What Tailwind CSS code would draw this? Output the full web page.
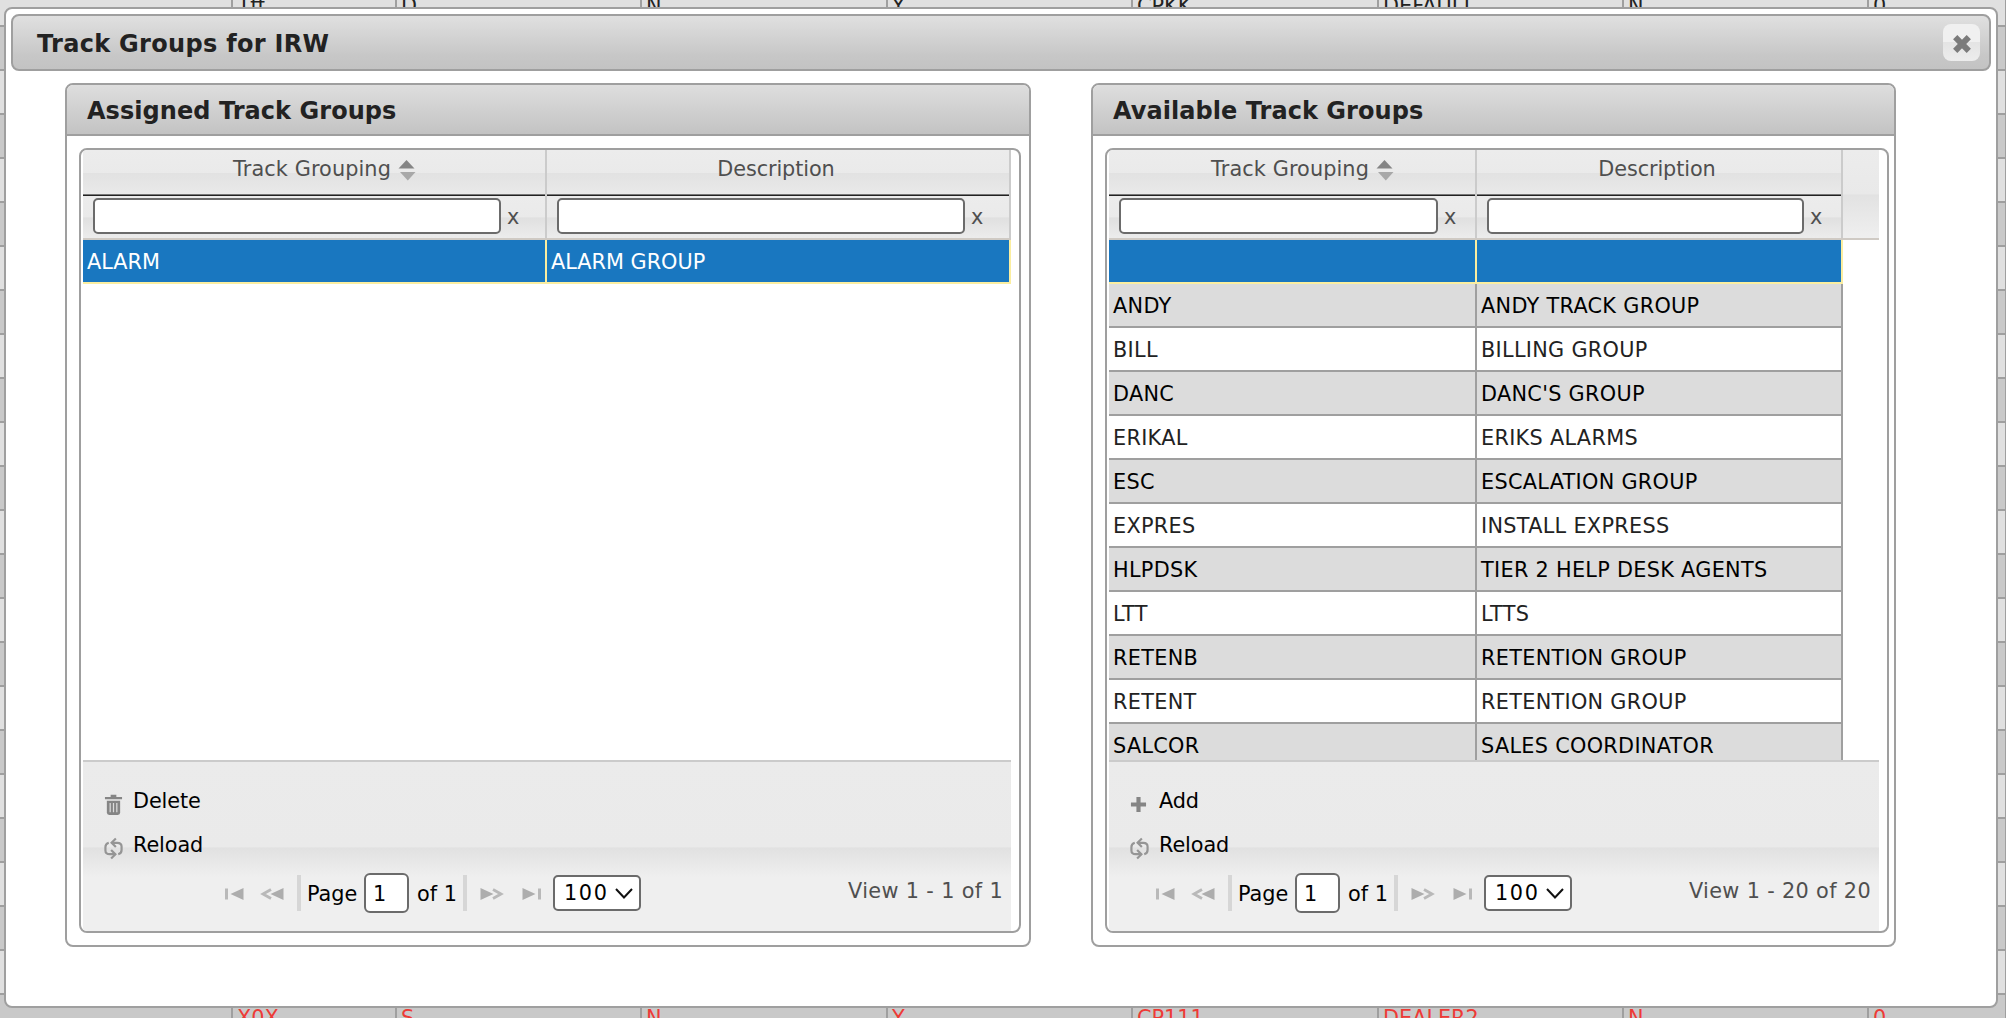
<!DOCTYPE html>
<html lang="en">
<head>
  <meta charset="UTF-8" />
  <meta name="viewport" content="width=device-width, initial-scale=1.0" />
  <title>Track Groups for IRW</title>
  <script src="https://cdn.jsdelivr.net/npm/@tailwindcss/browser@4"></script>
</head>
<body class="relative w-[2006px] h-[1018px] overflow-hidden bg-[#c9c9c9] font-['DejaVu_Sans',Verdana,sans-serif] text-[20.8px] text-black">

  <!-- icon set -->
  <svg class="hidden">
    <symbol id="i-sort" viewBox="0 0 18 22">
      <path d="M8.5 1 L16.5 9.5 H0.5 Z" fill="#858585" /><path d="M2 13 H17.5 L9.8 21.5 Z" fill="#a8a8a8" />
    </symbol>
    <symbol id="i-close" viewBox="0 0 20 20">
      <path d="M3.2 3.2 L16.8 16.8 M16.8 3.2 L3.2 16.8" stroke="#7b7b7b" stroke-width="6" />
    </symbol>
    <symbol id="i-trash" viewBox="0 0 20 22">
      <path d="M1 3.8 H19 M7 1.5 H13" stroke="#858585" stroke-width="2.4" />
      <path d="M3 6.5 H17 V19 Q17 21.5 14.5 21.5 H5.5 Q3 21.5 3 19 Z" fill="#858585" />
      <path d="M6.5 9 V18.5 M10 9 V18.5 M13.5 9 V18.5" stroke="#dcdcdc" stroke-width="1.3" />
    </symbol>
    <symbol id="i-plus" viewBox="0 0 18 18">
      <path d="M9 1 V17 M1 9 H17" stroke="#858585" stroke-width="4.4" />
    </symbol>
    <symbol id="i-reload" viewBox="0 0 20 24">
      <g fill="none" stroke="#959595" stroke-width="2.3">
        <path d="M8 6 H14 Q18.500 6 18.500 10 V13.500 Q18.500 17 15 18" />
        <path d="M12.500 1.500 L8 6 L12.500 10.500" />
        <path d="M12 18 H6 Q1.500 18 1.500 14 V10.500 Q1.500 7 5 6" />
        <path d="M7.500 13.500 L12 18 L7.500 22.500" />
      </g>
    </symbol>
    <symbol id="i-first" viewBox="0 0 24 14">
      <path d="M2.5 1.5 V12.5" stroke="#b9b9b9" stroke-width="3" /><path d="M19.5 1 V13 L6.500 7 Z" fill="#adadad" />
    </symbol>
    <symbol id="i-prev" viewBox="0 0 24 14">
      <path d="M11 2.5 L3 7 L11 11.5" fill="none" stroke="#b9b9b9" stroke-width="2.8" /><path d="M23.5 1 V13 L10.500 7 Z" fill="#adadad" />
    </symbol>
  </svg>

  <!-- page grid behind the dialog -->
  <div id="backdrop" class="absolute left-0 -top-[17px] w-[2006px] bg-[#9f9f9f]"></div>

  <!-- dialog -->
  <div class="absolute left-[4px] top-[7px] w-[1994px] h-[1001px] bg-white border-2 border-[#9f9f9f] rounded-lg p-[5px]">
    <div class="flex items-center justify-between h-[57px] pl-[24px] pr-[9px] border-2 border-[#9f9f9f] rounded-lg bg-linear-to-b from-[#e0e0e0] via-[#c7c7c7] via-75% to-[#c3c3c3]">
      <h1 class="pt-[3px] text-[24px] tracking-[0.3px] font-bold text-[#222]">Track Groups for IRW</h1>
      <button class="flex items-center justify-center size-[37px] rounded-lg bg-linear-to-b from-[#f0f0f0] from-50% via-[#e4e4e4] via-50% to-[#ededed]">
        <svg class="size-[20px] mt-0.5 ml-px"><use href="#i-close" /></svg>
      </button>
    </div>
    <div id="panels" class="flex gap-[60px] mt-3 ml-[54px]"></div>
  </div>

  <script>
    // backdrop: 44px rows, alternating shades
    const cols = ['', '1ff', 'D', 'N', 'Y', 'CPKK', 'DEFAULT', 'N', '0'];
    const lastCols = ['', 'X0X', 'S', 'N', 'Y', 'CP111', 'DEALER2', 'N', '0'];
    let back = '';
    for (let i = 0; i < 24; i++) {
      const cells = i === 0 ? cols : i === 23 ? lastCols : cols.map(() => '');
      const bg = i % 2 ? 'bg-[#c9c9c9]' : 'bg-[#e0e0e0]';
      const fg = i === 23 ? 'text-[#ee3a36]' : 'text-[#222]';
      back += `<div class="grid grid-cols-[231px_162px_243px_244px_243px_244px_243px_243px_136px] gap-x-[2px] h-[44px] pb-[2px] ${fg}">` +
        cells.map(c => `<div class="${bg} h-[42px] pl-[4px] leading-[46px]">${c}</div>`).join('') + '</div>';
    }
    document.getElementById('backdrop').innerHTML = back;

    const panels = [
      {
        title: 'Assigned Track Groups', action: 'Delete', icon: 'i-trash', iconSize: 'w-[19px] h-[22px]', view: 'View 1 - 1 of 1', gutter: false,
        panel: 'w-[966px]', head: 'w-[962px]', box: 'w-[942px]', grid: 'grid-cols-[464px_464px]', body: 'w-[928px]', inputs: ['w-[408px]', 'w-[408px]'], pager: 'ml-[141px]',
        rows: [['ALARM', 'ALARM GROUP']]
      },
      {
        title: 'Available Track Groups', action: 'Add', icon: 'i-plus', iconSize: 'w-[17px] h-[17px]', view: 'View 1 - 20 of 20', gutter: true,
        panel: 'w-[805px]', head: 'w-[801px]', box: 'w-[784px]', grid: 'grid-cols-[368px_366px]', body: 'w-[770px]', inputs: ['w-[319px]', 'w-[317px]'], pager: 'ml-[46px]',
        rows: [['', ''], ['ANDY', 'ANDY TRACK GROUP'], ['BILL', 'BILLING GROUP'], ['DANC', "DANC'S GROUP"], ['ERIKAL', 'ERIKS ALARMS'],
          ['ESC', 'ESCALATION GROUP'], ['EXPRES', 'INSTALL EXPRESS'], ['HLPDSK', 'TIER 2 HELP DESK AGENTS'], ['LTT', 'LTTS'],
          ['RETENB', 'RETENTION GROUP'], ['RETENT', 'RETENTION GROUP'], ['SALCOR', 'SALES COORDINATOR']]
      }
    ];

    function heading(text, sort) {
      return `<div class="flex justify-center items-center h-[46px] pb-[7px] border-r-2 border-[#cbcbcb] bg-[linear-gradient(#ececec,#eaeaea_50%,#e2e2e2_51%,#eaeaea)] shadow-[inset_0_-1px_0_#222,inset_0_-2px_0_#777] text-[#4f4f4f]">
        ${sort ? `<span class="ml-[21px] tracking-[0.1px]">${text}</span><svg class="w-[18px] h-[22px] ml-[7px] mt-px"><use href="#i-sort" /></svg>` : `<span class="-ml-[4px] -tracking-[0.1px]">${text}</span>`}</div>`;
    }

    function filter(width) {
      return `<div class="flex items-start h-[42px] pl-[10px] pt-[2px] border-r-2 border-[#cbcbcb] bg-[linear-gradient(#ececec,#eaeaea_50%,#e0e0e0_52%,#ececec)] text-[#4f4f4f]">
        <input class="${width} h-[36px] bg-white border-2 border-[#6b6b6b] rounded-[5px]" /><span class="ml-[6px] leading-[39px]">x</span></div>`;
    }

    function row(r, i) {
      const bg = i === 0 ? 'bg-[#1977c0] text-white border-[#fbeea0]' : i % 2 ? 'bg-[#dcdcdc] border-[#9f9f9f] tracking-[0.3px]' : 'bg-white text-[#222] border-[#9f9f9f] tracking-[0.3px]';
      return r.map(t => `<div class="h-[44px] pl-[4px] leading-[45px] whitespace-nowrap border-r-2 border-b-2 ${bg}">${t}</div>`).join('');
    }

    function button(icon, size, text) {
      return `<div class="flex items-center h-[44px] pl-[21px]"><span class="w-[29px]"><svg class="${size} mt-[7px]"><use href="#${icon}" /></svg></span><span class="pt-[2px] -tracking-[0.1px]">${text}</span></div>`;
    }

    document.getElementById('panels').innerHTML = panels.map(p => `
      <section class="${p.panel} h-[864px] border-2 border-[#9f9f9f] rounded-lg">
        <h2 class="${p.head} h-[51px] pl-[20px] leading-[53px] border-b-2 border-[#9f9f9f] rounded-t-md bg-linear-to-b from-[#dedede] to-[#c3c3c3] text-[24px] tracking-[0.05px] font-bold text-[#222]">${p.title}</h2>
        <div class="${p.box} h-[785px] mt-[12px] ml-[12px] pl-[2px] border-2 border-[#9f9f9f] rounded-lg overflow-hidden">
          <div class="${p.body}">
            <div class="flex border-b-2 border-[#cfcac4]">
              <div class="grid ${p.grid}">${heading('Track Grouping', true)}${heading('Description', false)}${filter(p.inputs[0])}${filter(p.inputs[1])}</div>
              ${p.gutter ? '<div class="grow bg-[linear-gradient(#ececec,#e9e9e9_50%,#e2e2e2_51%,#efefef)]"></div>' : ''}
            </div>
            <div class="h-[520px] overflow-hidden"><div class="grid ${p.grid}">${p.rows.map(row).join('')}</div></div>
            <div class="h-[171px] pt-[17px] border-t-2 border-[#cbcbcb] bg-[linear-gradient(#ebebeb,#eaeaea_50%,#e1e1e1_51%,#efefef_68%,#efefef)]">
              ${button(p.icon, p.iconSize, p.action)}
              ${button('i-reload', 'w-[19px] h-[23px]', 'Reload')}
              <div class="flex items-center h-[52px]">
                <svg class="w-[24px] h-[14px] mt-[2px] ${p.pager}"><use href="#i-first" /></svg>
                <svg class="w-[24px] h-[14px] mt-[2px] ml-[12px]"><use href="#i-prev" /></svg>
                <span class="w-[4px] h-[36px] ml-[13px] bg-[#d6d6d6]"></span>
                <span class="w-[63px] pl-[6px] pt-[3px]">Page</span>
                <span class="w-[45px] h-[40px] pl-[7px] leading-[39px] bg-white border-2 border-[#6b6b6b] rounded-[6px]">1</span>
                <span class="w-[54px] pl-[8px] pt-[3px] whitespace-nowrap">of 1</span>
                <span class="w-[4px] h-[36px] bg-[#d6d6d6]"></span>
                <svg class="w-[24px] h-[14px] mt-[2px] ml-[13px] rotate-180"><use href="#i-prev" /></svg>
                <svg class="w-[24px] h-[14px] mt-[2px] ml-[14px] rotate-180"><use href="#i-first" /></svg>
                <span class="flex items-center w-[88px] h-[36px] ml-[11px] pl-[9px] bg-white border-2 border-[#6b6b6b] rounded-[5px]">
                  <span class="w-[51px] pt-[2px] tracking-[1.6px]">100</span>
                  <svg class="w-[18px] h-[11px]" viewBox="0 0 18 11"><path d="M1 1 L9 9.5 L17 1" fill="none" stroke="#111" stroke-width="2" /></svg>
                </span>
                <span class="grow pr-[8px] pb-[3px] text-right text-[#4f4f4f] tracking-[0.35px] whitespace-nowrap">${p.view}</span>
              </div>
            </div>
          </div>
        </div>
      </section>`).join('');
  </script>
</body>
</html>
